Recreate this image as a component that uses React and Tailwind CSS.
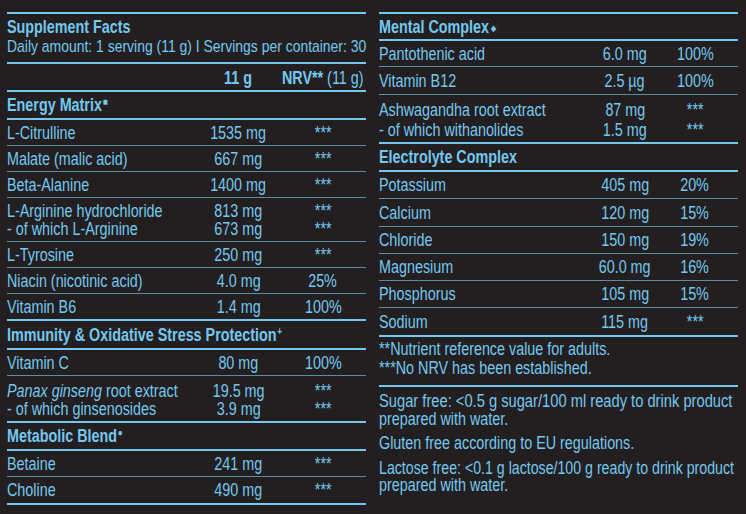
const L = "grid-cols-[188px_87px_82px]";
const R = "grid-cols-[211px_70px_70px]";
const thin = "border-b border-[#5a8ca4]";
const thick = "border-b-2 border-[#74c8ef]";

// Arial squeezed to the width of the condensed face on the label
function T({ children, o = "origin-left", s = "scale-x-[0.82]" }) {
  return <span className={`inline-block whitespace-nowrap ${s} ${o}`}>{children}</span>;
}

function Row({ grid, lines, className, leading = "leading-[17.5px]" }) {
  return (
    <div className={`flex flex-col justify-center pt-[2px] ${className}`}>
      {lines.map(([n, a, v], i) => (
        <div key={i} className={`grid ${grid} ${leading}`}>
          <div>
            <T>{n}</T>
          </div>
          <div className="flex justify-center">
            <T o="origin-center">{a}</T>
          </div>
          <div className="flex justify-center">
            <T o="origin-center">{v}</T>
          </div>
        </div>
      ))}
    </div>
  );
}

function Head({ className, children }) {
  return (
    <div className={`flex items-center pt-[1px] font-bold ${className}`}>
      <T>{children}</T>
    </div>
  );
}

export default function App() {
  return (
    <div className="flex h-[514px] w-[746px] gap-[13px] overflow-hidden bg-[#231f20] pt-[12px] pl-[7px] font-['Liberation_Sans',Arial,sans-serif] text-[17.5px] text-[#74c8ef]">
      <div className="w-[359px] self-start border-t-2 border-[#74c8ef]">
        <div className={`h-[50px] pt-[3px] ${thick}`}>
          <div className="font-bold leading-5">
            <T>Supplement Facts</T>
          </div>
          <div className="text-[17px] leading-5">
            <T>Daily amount: 1 serving (11 g) I Servings per container: 30</T>
          </div>
        </div>
        <div className={`grid h-[28px] items-center pt-[1px] ${L} ${thick}`}>
          <div />
          <div className="flex justify-center font-bold">
            <T o="origin-center">11 g</T>
          </div>
          <div className="flex justify-end">
            <T o="origin-right">
              <b>NRV**</b> (11 g)
            </T>
          </div>
        </div>
        <Head className={`h-[28px] ${thick}`}>
          Energy Matrix<span className="relative -top-[6px] ml-[1px] text-[10px]">■</span>
        </Head>
        <Row grid={L} className={`h-[26px] ${thin}`} lines={[["L-Citrulline", "1535 mg", "***"]]} />
        <Row grid={L} className={`h-[26px] ${thin}`} lines={[["Malate (malic acid)", "667 mg", "***"]]} />
        <Row grid={L} className={`h-[26px] ${thin}`} lines={[["Beta-Alanine", "1400 mg", "***"]]} />
        <Row
          grid={L}
          className={`h-[44px] ${thin}`}
          lines={[
            ["L-Arginine hydrochloride", "813 mg", "***"],
            ["- of which L-Arginine", "673 mg", "***"],
          ]}
        />
        <Row grid={L} className={`h-[26px] ${thin}`} lines={[["L-Tyrosine", "250 mg", "***"]]} />
        <Row grid={L} className={`h-[26px] ${thin}`} lines={[["Niacin (nicotinic acid)", "4.0 mg", "25%"]]} />
        <Row grid={L} className={`h-[27px] ${thick}`} lines={[["Vitamin B6", "1.4 mg", "100%"]]} />
        <Head className={`h-[29px] ${thick}`}>
          Immunity &amp; Oxidative Stress Protection
          <span className="relative -top-[6px] ml-[1px] text-[10px]">+</span>
        </Head>
        <Row grid={L} className={`h-[26px] ${thin}`} lines={[["Vitamin C", "80 mg", "100%"]]} />
        <Row
          grid={L}
          className={`h-[47px] ${thick}`}
          leading="leading-[18px]"
          lines={[
            [
              <>
                <i>Panax ginseng</i> root extract
              </>,
              "19.5 mg",
              "***",
            ],
            ["- of which ginsenosides", "3.9 mg", "***"],
          ]}
        />
        <Head className={`h-[28px] ${thick}`}>
          Metabolic Blend<span className="relative -top-[6px] ml-[1px] text-[10px]">●</span>
        </Head>
        <Row grid={L} className={`h-[26px] ${thin}`} lines={[["Betaine", "241 mg", "***"]]} />
        <Row grid={L} className={`h-[28px] ${thick}`} lines={[["Choline", "490 mg", "***"]]} />
      </div>

      <div className="w-[359px] self-start border-t-2 border-[#74c8ef]">
        <Head className={`h-[27px] ${thick}`}>
          Mental Complex<span className="relative -top-[2px] ml-[2px] text-[8px]">◆</span>
        </Head>
        <Row grid={R} className={`h-[26px] ${thin}`} lines={[["Pantothenic acid", "6.0 mg", "100%"]]} />
        <Row grid={R} className={`h-[28px] ${thin}`} lines={[["Vitamin B12", "2.5 µg", "100%"]]} />
        <Row
          grid={R}
          className={`h-[49px] ${thick}`}
          leading="leading-[20px]"
          lines={[
            ["Ashwagandha root extract", "87 mg", "***"],
            ["- of which withanolides", "1.5 mg", "***"],
          ]}
        />
        <Head className={`h-[28px] ${thick}`}>Electrolyte Complex</Head>
        <Row grid={R} className={`h-[27px] ${thin}`} lines={[["Potassium", "405 mg", "20%"]]} />
        <Row grid={R} className={`h-[28px] ${thin}`} lines={[["Calcium", "120 mg", "15%"]]} />
        <Row grid={R} className={`h-[27px] ${thin}`} lines={[["Chloride", "150 mg", "19%"]]} />
        <Row grid={R} className={`h-[27px] ${thin}`} lines={[["Magnesium", "60.0 mg", "16%"]]} />
        <Row grid={R} className={`h-[27px] ${thin}`} lines={[["Phosphorus", "105 mg", "15%"]]} />
        <Row grid={R} className={`h-[29px] ${thick}`} lines={[["Sodium", "115 mg", "***"]]} />
        <div className={`h-[50px] pt-[3px] leading-[19px] ${thick}`}>
          <div>
            <T>**Nutrient reference value for adults.</T>
          </div>
          <div>
            <T>***No NRV has been established.</T>
          </div>
        </div>
        <div className="pt-[6px] leading-[17.5px]">
          <div>
            <T s="scale-x-[0.84]">Sugar free: &lt;0.5 g sugar/100 ml ready to drink product</T>
          </div>
          <div>
            <T>prepared with water.</T>
          </div>
          <div className="mt-[7px]">
            <T>Gluten free according to EU regulations.</T>
          </div>
          <div className="mt-[7px]">
            <T s="scale-x-[0.81]">Lactose free: &lt;0.1 g lactose/100 g ready to drink product</T>
          </div>
          <div>
            <T>prepared with water.</T>
          </div>
        </div>
      </div>
    </div>
  );
}
